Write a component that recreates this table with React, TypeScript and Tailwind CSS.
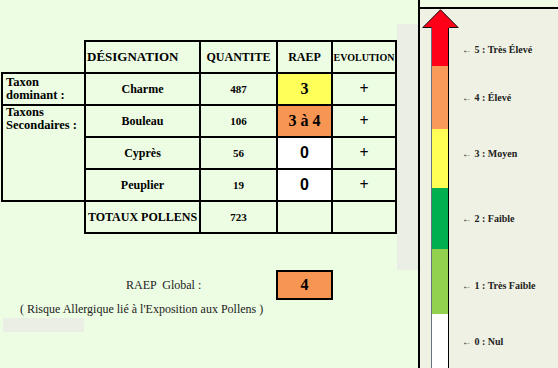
const bands = [
  { color: 'bg-[#ff0019]', h: 'h-[38px]', label: '← 5 : Très Élevé', tweak: 'pt-[4px]' },
  { color: 'bg-[#fa9a5a]', h: 'h-[63px]', label: '← 4 : Élevé', tweak: '' },
  { color: 'bg-[#ffff55]', h: 'h-[59px]', label: '← 3 : Moyen', tweak: 'pb-[11px]' },
  { color: 'bg-[#00b050]', h: 'h-[61px]', label: '← 2 : Faible', tweak: '' },
  { color: 'bg-[#92d050]', h: 'h-[65px]', label: '← 1 : Très Faible', tweak: 'pt-[7px]' },
  { color: 'bg-white', h: 'h-[54px]', label: '← 0 : Nul', tweak: '' },
];

const rows = [
  { name: 'Charme', qty: '487', raep: '3', bg: 'bg-[#ffff5a]', isZero: false },
  { name: 'Bouleau', qty: '106', raep: '3 à 4', bg: 'bg-[#f79552]', isZero: false },
  { name: 'Cyprès', qty: '56', raep: '0', bg: 'bg-white', isZero: true },
  { name: 'Peuplier', qty: '19', raep: '0', bg: 'bg-white', isZero: true },
];

const cell = 'border-2 border-black text-center align-middle p-0';

function PollenTable() {
  return (
    <table className="ml-[1px] mt-[40px] border-collapse table-fixed text-black [font-family:'Liberation_Serif',serif]">
      <colgroup>
        <col className="w-[83px]" />
        <col className="w-[115px]" />
        <col className="w-[77px]" />
        <col className="w-[55px]" />
        <col className="w-[64px]" />
      </colgroup>
      <tbody>
        <tr className="h-[32px]">
          <td className="border-0 p-0" />
          <th className="border-2 border-black text-left align-middle p-0 pl-[1px] text-[13px] font-bold">
            DÉSIGNATION
          </th>
          <th className={`${cell} text-[12px] font-bold`}>QUANTITE</th>
          <th className={`${cell} text-[12px] font-bold`}>RAEP</th>
          <th className={`${cell} text-[10px] font-bold`}>EVOLUTION</th>
        </tr>
        {rows.map((r, i) => (
          <tr key={r.name} className="h-[32px]">
            {i === 0 && (
              <td className="border-2 border-black align-top text-left pl-[3px] pt-[2px] text-[12.5px] font-bold leading-[12.5px]">
                Taxon
                <br />
                dominant :
              </td>
            )}
            {i === 1 && (
              <td
                rowSpan={3}
                className="border-2 border-black align-top text-left pl-[3px] pt-0 text-[12.5px] font-bold leading-[12.5px]"
              >
                Taxons
                <br />
                Secondaires :
              </td>
            )}
            <td className={`${cell} text-[12px] font-bold`}>{r.name}</td>
            <td className={`${cell} text-[11px] font-bold`}>{r.qty}</td>
            <td
              className={`${cell} ${r.bg} text-[16px] font-bold ${
                r.isZero ? "[font-family:'Liberation_Sans',sans-serif]" : ''
              }`}
            >
              {r.raep}
            </td>
            <td className={`${cell} text-[16px] font-bold`}>+</td>
          </tr>
        ))}
        <tr className="h-[32px]">
          <td className="border-0 p-0" />
          <td className={`${cell} text-[12px] font-bold whitespace-nowrap`}>TOTAUX POLLENS</td>
          <td className={`${cell} text-[11px] font-bold`}>723</td>
          <td className={cell} />
          <td className={cell} />
        </tr>
      </tbody>
    </table>
  );
}

function RiskScale() {
  return (
    <div className="w-[140px] h-full flex flex-col border-l-2 border-black">
      <div className="h-[7px] bg-[#f0fbe6]" />
      <div className="flex-1 flex flex-col border-t-2 border-black bg-[#eef1e3]">
        <div className="h-[19px] pl-[2px]">
          <svg width="37" height="19" viewBox="0 0 37 19">
            <polygon points="0.5,19 18.5,0.5 36.5,19" fill="#ff0019" />
            <polyline
              points="9.5,18.5 0.8,18.5 18.5,0.8 36.2,18.5 27.5,18.5"
              fill="none"
              stroke="#111"
              strokeWidth="1"
            />
          </svg>
        </div>
        {bands.map((b) => (
          <div key={b.label} className={`flex items-center ${b.h}`}>
            <div
              className={`ml-[11px] w-[18px] h-full ${b.color} border-l border-l-gray-500 border-r border-r-black`}
            />
            <span className={`ml-[13px] text-[10px] font-bold text-[#222] whitespace-nowrap ${b.tweak}`}>
              {b.label}
            </span>
          </div>
        ))}
      </div>
    </div>
  );
}

export default function App() {
  return (
    <div className="w-[558px] h-[368px] flex overflow-hidden bg-[#edfde3] [font-family:'Liberation_Serif',serif]">
      <div className="w-[418px] flex">
        <div className="w-[397px] flex flex-col">
          <PollenTable />
          <div className="mt-[36px] flex items-center">
            <div className="w-[276px] pl-[126px] text-[12px] whitespace-pre text-[#222]">RAEP  Global :</div>
            <div className="w-[57px] h-[30px] border-2 border-black bg-[#f79552] flex items-center justify-center text-[16px] font-bold">
              4
            </div>
          </div>
          <p className="mt-[3px] pl-[20px] text-[12px] leading-[12px] text-[#222]">
            ( Risque Allergique lié à l'Exposition aux Pollens )
          </p>
          <div className="mt-[3px] ml-[3px] w-[81px] h-[14px] bg-[#ebeee4]" />
        </div>
        <div className="w-[21px] mt-[24px] h-[246px] bg-[#ebeee4]" />
      </div>
      <RiskScale />
    </div>
  );
}
